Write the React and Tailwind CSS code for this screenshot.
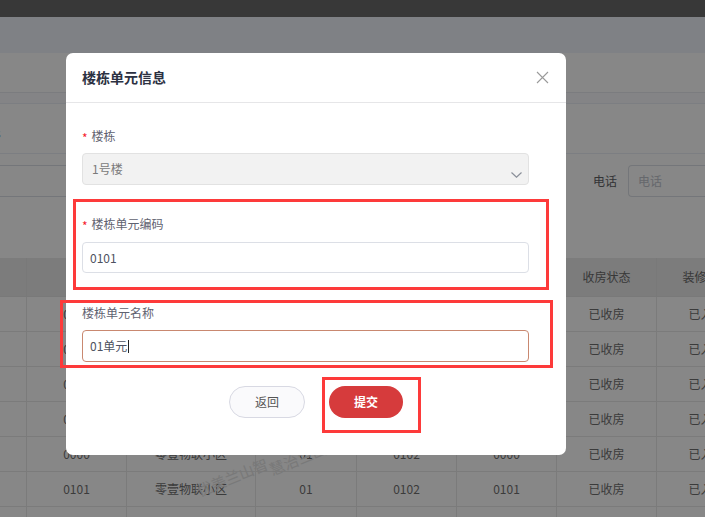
import React from 'react';

const cols = [
  { w: 'w-[27px]', key: 'idx' },
  { w: 'w-[100px]', key: 'code' },
  { w: 'w-[129px]', key: 'area' },
  { w: 'w-[101px]', key: 'build' },
  { w: 'w-[100px]', key: 'unit' },
  { w: 'w-[100px]', key: 'room' },
  { w: 'w-[100px]', key: 'take' },
  { w: 'w-[100px]', key: 'deco' },
];

const header = { idx: '', code: '', area: '小区', build: '楼栋', unit: '单元', room: '房号', take: '收房状态', deco: '装修状态' };

const rows = [
  { code: '0101', area: '零壹物联小区', build: '01', unit: '0102', room: '0101' },
  { code: '0101', area: '零壹物联小区', build: '01', unit: '0102', room: '0101' },
  { code: '0101', area: '零壹物联小区', build: '01', unit: '0102', room: '0101' },
  { code: '0101', area: '零壹物联小区', build: '01', unit: '0102', room: '0101' },
  { code: '0000', area: '零壹物联小区', build: '01', unit: '0102', room: '0000' },
  { code: '0101', area: '零壹物联小区', build: '01', unit: '0102', room: '0101' },
  { code: '0101', area: '零壹物联小区', build: '01', unit: '0102', room: '0101' },
].map((r) => ({ ...r, idx: '', take: '已收房', deco: '已入住' }));

const Label = ({ required, children }) => (
  <div className="h-[20px] flex items-center text-[12px] text-[#5f6270]">
    {required && <span className="text-[#f5222d] mr-[4px] text-[12px] leading-none mt-[3px]">*</span>}
    {children}
  </div>
);

const RedBox = ({ className }) => (
  <div className={`absolute border-[3px] border-[#fd3a3a] pointer-events-none ${className}`} />
);

export default function App() {
  return (
    <div
      className="relative w-[705px] h-[517px] overflow-hidden bg-white"
      style={{ fontFamily: '"Noto Sans CJK SC", "Noto Sans", sans-serif' }}
    >
      {/* page behind the dialog */}
      <div className="h-[17px] bg-[#6a6a6a]" />
      <div className="h-[36px] bg-[#f0f3fb]" />
      <div className="h-[39px] bg-white" />
      <div className="h-[11px] bg-[#f9fafd] border-t border-[#e9ebf0]" />
      <div className="h-[50px] flex items-center border-t border-[#ebeef5]">
        <span className="-ml-[5px] mt-[8px] text-[12px] text-[#606266]">s</span>
      </div>
      <div className="h-[105px] border-t border-[#ebeef5] pt-[11px]">
        <div className="flex items-center h-[32px]">
          <div className="w-[230px] h-[32px] border border-[#dcdfe6] border-l-0" />
          <div className="ml-auto flex items-center">
            <span className="text-[12px] text-[#606266] mr-[11px]">电话</span>
            <div className="w-[77px] h-[32px] border border-[#dcdfe6] rounded-[4px] border-r-0 rounded-r-none pl-[9px] flex items-center text-[12px] text-[#c0c4cc]">
              电话
            </div>
          </div>
        </div>
      </div>

      {/* table */}
      <div className="text-[12px] text-[#666]">
        <div className="flex h-[39px] bg-[#eaeaea] border-b border-[#e4e4e4]">
          {cols.map((c) => (
            <div key={c.key} className={`${c.w} shrink-0 flex items-center justify-center border-r border-[#e4e4e4] text-[#6b6b6b]`}>
              {header[c.key]}
            </div>
          ))}
        </div>
        {rows.map((r, i) => (
          <div key={i} className="flex h-[35px] border-b border-[#e8e8e8]">
            {cols.map((c) => (
              <div key={c.key} className={`${c.w} shrink-0 flex items-center justify-center border-r border-[#e8e8e8] text-[#707070]`}>
                {r[c.key]}
              </div>
            ))}
          </div>
        ))}
      </div>

      {/* watermark */}
      <div className="absolute left-[195px] top-[466px] -rotate-[22deg] text-[15px] text-[#e4e4e4]">优美兰山智</div>
      <div className="absolute left-[268px] top-[448px] -rotate-[22deg] text-[15px] text-[#e4e4e4]">慧治兰山</div>

      {/* mask */}
      <div className="absolute inset-0 bg-[rgba(0,0,0,0.47)]" />

      {/* dialog */}
      <div className="absolute left-[66px] top-[53px] w-[500px] h-[402px] bg-white rounded-[7px]">
        <div className="h-[50px] flex items-center justify-between pl-[16px] pr-[17px] border-b border-[#e6e6e8]">
          <span className="text-[14px] font-bold text-[#2c3142]">楼栋单元信息</span>
          <svg width="13" height="13" viewBox="0 0 13 13" fill="none" stroke="#9a9a9a" strokeWidth="1.1">
            <path d="M1 1 L12 12 M12 1 L1 12" />
          </svg>
        </div>

        <div className="px-[16px] pt-[23px]">
          <Label required>楼栋</Label>
          <div className="mt-[7px] w-[447px] h-[32px] rounded-[4px] bg-[#f2f2f2] border border-[#e2e2e2] flex items-center pl-[9px] pr-[7px] text-[12px] text-[#7a7a7a] relative">
            1号楼
            <svg className="absolute right-[6px] top-[18px]" width="11" height="6" viewBox="0 0 11 6" fill="none" stroke="#8a8f99" strokeWidth="1.2">
              <path d="M0.5 0.5 L5.5 5.2 L10.5 0.5" />
            </svg>
          </div>

          <div className="mt-[29px]">
            <Label required>楼栋单元编码</Label>
          </div>
          <div className="mt-[8px] w-[447px] h-[31px] rounded-[4px] border border-[#dcdfe6] flex items-center pl-[7px] text-[12px] text-[#4d5160]">
            0101
          </div>

          <div className="mt-[30px]">
            <Label>楼栋单元名称</Label>
          </div>
          <div className="mt-[7px] w-[447px] h-[32px] rounded-[4px] border border-[#c98870] flex items-center pl-[7px] text-[12px] text-[#4d5160]">
            01单元
            <span className="inline-block w-px h-[13px] bg-[#222] ml-[1px]" />
          </div>

          <div className="mt-[24px] flex justify-center gap-[24px]">
            <button className="w-[76px] h-[32px] rounded-full border border-[#d8d9e3] bg-[#fafafc] text-[12px] text-[#555]">
              返回
            </button>
            <button className="w-[74px] h-[32px] rounded-full bg-[#d63b3c] text-[12px] font-bold text-white">
              提交
            </button>
          </div>
        </div>
      </div>

      {/* annotation boxes */}
      <RedBox className="left-[73px] top-[199px] w-[476px] h-[91px]" />
      <RedBox className="left-[60px] top-[300px] w-[493px] h-[68px]" />
      <RedBox className="left-[322px] top-[377px] w-[99px] h-[56px]" />
    </div>
  );
}
